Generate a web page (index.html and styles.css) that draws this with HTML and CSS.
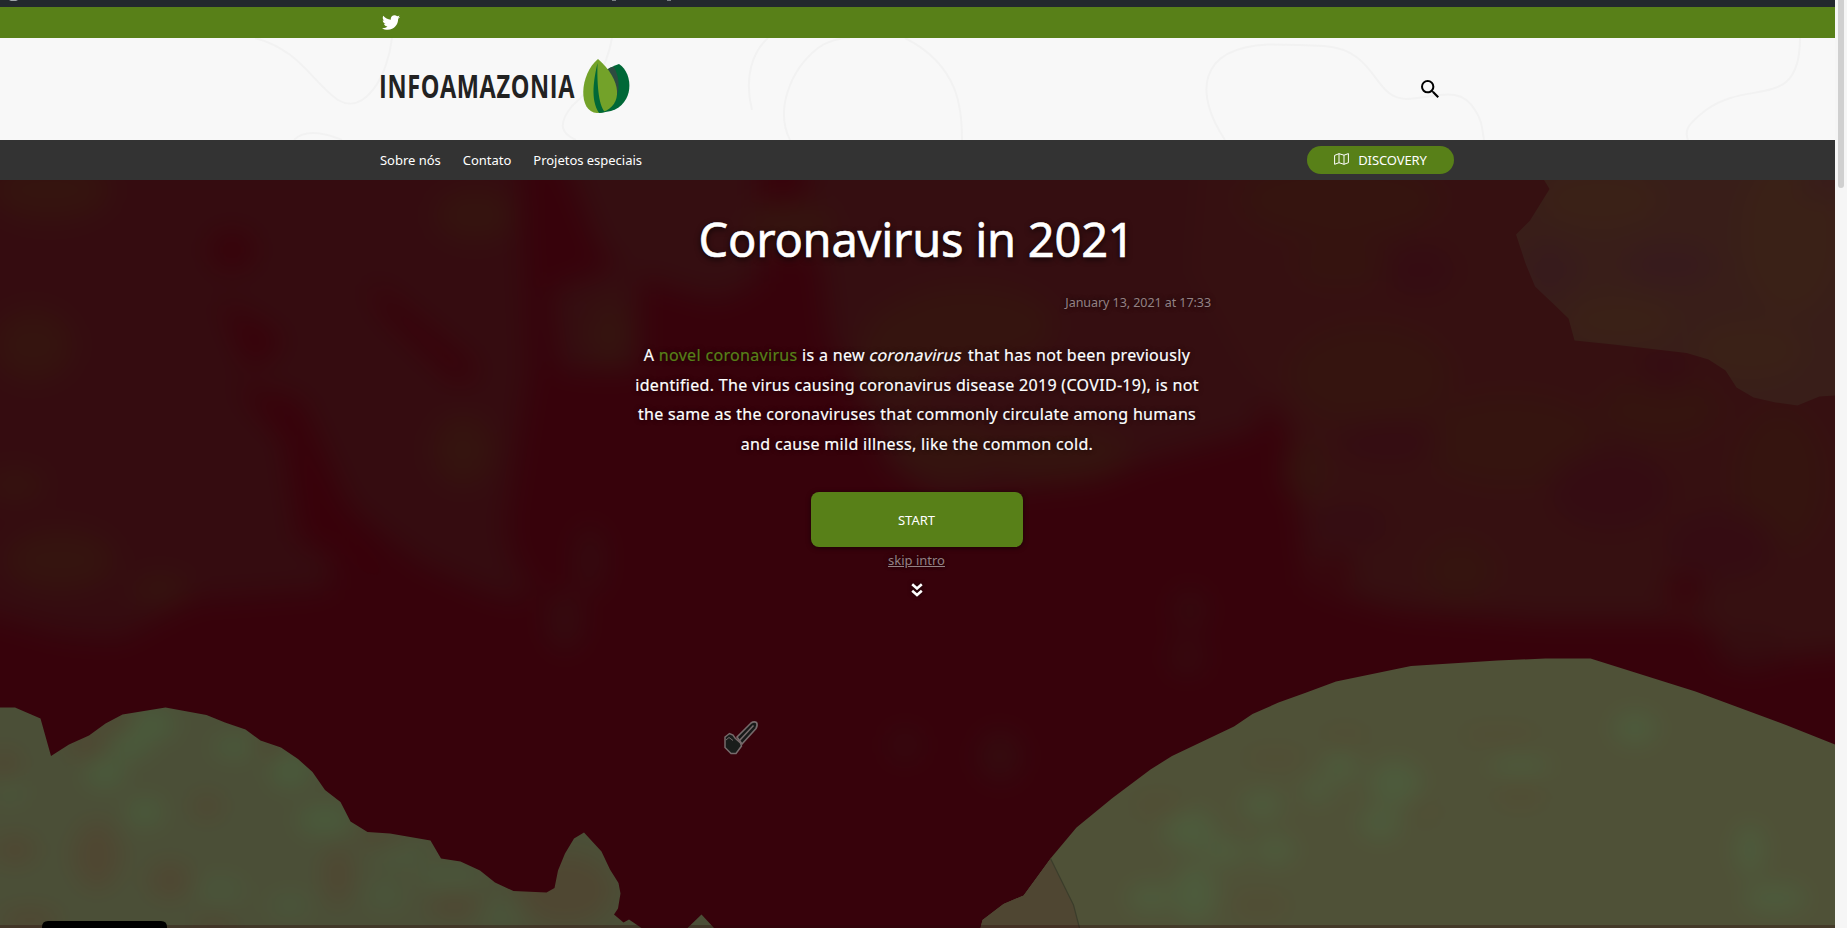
FILE: index.html
```html
<!DOCTYPE html>
<html lang="pt-BR">
<head>
<meta charset="utf-8">
<title>Coronavirus in 2021 - InfoAmazonia</title>
<link rel="stylesheet" href="styles.css">
</head>
<body>
<div class="window">
<div class="page">
  <div class="adminbar"><svg width="1835" height="7" viewBox="0 0 1835 7"><g fill="#a0a5aa"><path d="M9 0h9l-2 1h-5z"/><path d="M612 0h4v1h-4zM667 0h4v1h-4z" opacity=".7"/></g></svg></div>
  <div class="social">
    <div class="container">
      <svg class="twitter" width="18" height="15" viewBox="0 0 512 416"><path fill="#fff" d="M459 104c.3 4.500.3 9 .3 13.600C459.300 256 353.700 416 161 416 101.500 416 46.100 398.800 0 368.800c8.400 1 16.600 1.300 25.300 1.300 49 0 94.200-16.600 130.300-44.800-46.100-1-84.800-31.200-98.100-72.800 6.500 1 13 1.600 19.800 1.600 9.400 0 18.800-1.300 27.600-3.600C56.800 240.800 20.800 198.500 20.800 147.200v-1.300c14 7.800 30.200 12.700 47.400 13.300C39.800 140.300 21.400 108.200 21.400 71.700c0-19.500 5.200-37.400 14.300-53C87.400 82.400 165 124.100 252 128.700c-1.600-7.800-2.600-15.900-2.600-24C249.400 46.800 296.200 0 354.400 0c30.200 0 57.500 12.700 76.700 33.100 23.700-4.500 46.500-13.300 66.600-25.300-7.800 24.400-24.400 44.800-46.100 57.800 21.100-2.300 41.600-8.100 60.400-16.200-14.300 20.800-32.200 39.300-53 54.600z"/></svg>
    </div>
  </div>
  <header class="masthead">
    <svg class="contours" width="1835" height="102" viewBox="0 38 1835 102" fill="none" stroke="#f2f2f2" stroke-width="2"><path d="M255 38C300 50 312 82 338 100C365 116 388 75 392 38M612 38C606 72 590 90 572 106C556 126 563 134 576 140M294 140C304 130 320 131 342 140M752 110C744 78 752 52 768 38M790 140C775 110 790 70 818 48Q832 38 850 38M905 38C960 66 962 110 962 140M1225 140C1195 95 1196 48 1268 44.500Q1300 45 1324 46C1378 50 1372 98 1406 99C1435 98 1460 84 1475 110C1482 120 1482 128 1484 140M1800 38C1800 112 1750 78 1706 110C1688 124 1684 130 1688 140"/></svg>
    <div class="container">
      <svg class="logo" width="252" height="60" viewBox="380 57 252 60">
        <text class="wordmark" x="379" y="97.700" textLength="196" lengthAdjust="spacingAndGlyphs">INFOAMAZONIA</text>
        <path fill="#006837" d="M619 64C634 74 634 104 611 111L600 113L602 74Q611 66 619 64z"/>
        <path fill="#2d4c41" d="M608 69C611 67 612 67 614 67C624 86 617 106 601 112L598 112V70z"/>
        <path fill="#73a229" d="M598 59C622 80 623 105 603 112Q600 113 597 113C578 112 579 75 598 59z"/>
        <path fill="#006837" d="M597.500 63C597 80 598 105 605 112L599 113C590 99 594 79 597.500 63z"/>
      </svg>
      <svg class="search" width="18" height="18" viewBox="3 3 17.500 17.500"><path fill="#000" d="M15.500 14h-.79l-.28-.27A6.471 6.471 0 0 0 16 9.500 6.500 6.500 0 1 0 9.500 16c1.610 0 3.090-.59 4.230-1.570l.27.280v.79l5 4.990L20.490 19zm-6 0C7.010 14 5 11.990 5 9.500S7.010 5 9.500 5 14 7.010 14 9.500 11.990 14 9.500 14z"/></svg>
    </div>
  </header>
  <nav class="mainnav">
    <div class="container">
      <ul class="menu"><li><a>Sobre nós</a></li><li><a>Contato</a></li><li><a>Projetos especiais</a></li></ul>
      <a class="discovery"><svg width="15" height="12" viewBox="0 0 15 12" fill="none" stroke="#fff"><path stroke-linejoin="round" d="M.6 2.400L5 .7L10 2.200L14.400.6V9.700L10 11.300L5 9.700L.6 11.300zM5 .7V9.700M10 2.200V11.300"/></svg><span>DISCOVERY</span></a>
    </div>
  </nav>
  <main class="hero">
    <svg class="map" width="1835" height="748" viewBox="0 180 1835 748">
      <defs>
        <filter id="soft" color-interpolation-filters="sRGB" x="-20%" y="-20%" width="140%" height="140%"><feGaussianBlur stdDeviation="14"/></filter>
        <filter id="haze" color-interpolation-filters="sRGB" x="-20%" y="-20%" width="140%" height="140%"><feGaussianBlur stdDeviation="11"/></filter>
        <clipPath id="west"><path d="M0 707.500H15L40.500 718.500L51 756L69 744.500L89 735.500L105.500 723.500L122.500 714.500L165.500 707.500L206.500 715L225 722.500L245.500 729.500L260.500 740.500L281 747.500L298 759L312.500 772L325 790L340.500 802L350.500 821.500L367.500 832L390 833.500L430.500 840.500L441 858.500L460.500 861.500L480 870.500L495 882.500L513.500 891L546.500 892.500L554.500 888L558 870.500L565 853.500L574 838.500L584 832.500L601.500 851.500L610 869.500L618.500 883L620.500 893.500L618 908.500L614 914.500L623.500 922.500L629 919.500L641.500 928H0zM687.500 928L701.500 914.500L714 928z"/></clipPath>
        <clipPath id="east"><path d="M980.500 928L982.500 920L1003.500 904L1023.500 895.500L1050.500 858.500L1076.500 827.500L1112.500 798L1150.500 769.500L1172 756L1234 726.500L1252.500 714L1278.500 702.500L1305 693L1336 681.500L1411 666L1497.500 660.500L1545.500 658.500H1590.500L1695.500 691.500L1786 725L1835 744.500V928z"/></clipPath>
        <clipPath id="north"><path d="M1544 180L1549.500 189L1530 220.500L1516 234.500L1525.500 263.500L1535 286.500L1554 304.500L1568.500 318.500L1574.500 340.500L1613 344.500L1686.500 353L1708.500 359.500L1725.500 370.500L1736.500 387.500L1753.500 397.500L1775.500 402.500L1797.500 405.500L1819.500 396.500L1835 395.500V180z"/></clipPath>
      </defs>
      <g filter="url(#soft)">
        <path fill="#37020b" d="M-300 0H2135V1128H-300z"/>
        <path fill="#350c10" d="M-30 150H520L530 370L510 500Q500 555 535 590Q520 610 470 585L425 565L390 540L340 500L330 590L190 600L120 640L60 635L-30 610z"/>
        <path fill="#350e11" d="M560 150H760V280L720 300Q640 285 600 250zM550 290L640 260V370L560 370zM800 150H1260L1290 250L1260 430L1080 480L940 500L890 470L860 400L830 340L820 260z"/>
        <path fill="#361011" d="M1200 150H1870V650L1760 660L1690 620L1540 620L1400 610L1310 585L1290 430L1240 360L1190 270z"/>
        <g fill="#35140f"><ellipse cx="50" cy="190" rx="60" ry="30"/><ellipse cx="33" cy="345" rx="40" ry="35"/><ellipse cx="60" cy="560" rx="55" ry="30"/><ellipse cx="15" cy="485" rx="30" ry="15"/><ellipse cx="160" cy="590" rx="30" ry="15"/><ellipse cx="475" cy="215" rx="40" ry="25"/><ellipse cx="463" cy="450" rx="30" ry="35"/><ellipse cx="610" cy="335" rx="20" ry="35"/><ellipse cx="790" cy="225" rx="45" ry="25"/><ellipse cx="970" cy="325" rx="85" ry="40"/><ellipse cx="900" cy="355" rx="40" ry="50"/><ellipse cx="950" cy="450" rx="55" ry="30"/><ellipse cx="1060" cy="455" rx="70" ry="28"/><ellipse cx="1340" cy="200" rx="100" ry="40"/><ellipse cx="1340" cy="265" rx="45" ry="20"/><ellipse cx="1370" cy="375" rx="80" ry="50"/><ellipse cx="1510" cy="440" rx="90" ry="45"/><ellipse cx="1460" cy="570" rx="35" ry="30"/><ellipse cx="1660" cy="410" rx="60" ry="30"/><ellipse cx="1780" cy="480" rx="45" ry="70"/><ellipse cx="1305" cy="470" rx="20" ry="30"/></g>
        <g fill="#350c12"><ellipse cx="1420" cy="270" rx="35" ry="25"/><ellipse cx="1665" cy="370" rx="25" ry="20"/><ellipse cx="1610" cy="490" rx="60" ry="40"/><ellipse cx="1390" cy="440" rx="50" ry="20"/><ellipse cx="1720" cy="545" rx="55" ry="35"/><ellipse cx="1350" cy="525" rx="40" ry="20"/></g>
        <g fill="#38010a"><ellipse cx="232" cy="250" rx="22" ry="18"/><path d="M220 300L285 340L250 370zM235 385L300 400L345 500L400 590L300 540L285 440z"/><path d="M370 280L480 370L460 385L380 310z"/><ellipse cx="1335" cy="570" rx="15" ry="15"/><ellipse cx="1685" cy="590" rx="18" ry="14"/></g>
        <g fill="#340d10"><ellipse cx="565" cy="620" rx="16" ry="30"/><ellipse cx="590" cy="560" rx="12" ry="35"/><ellipse cx="1190" cy="610" rx="14" ry="20"/><ellipse cx="1187" cy="657" rx="16" ry="16"/><ellipse cx="1000" cy="756" rx="20" ry="24"/><ellipse cx="1750" cy="650" rx="35" ry="18"/><ellipse cx="905" cy="745" rx="14" ry="14"/></g>
      </g>
      <g clip-path="url(#north)">
        <g filter="url(#soft)"><path fill="#391e19" d="M1300 0H2035V620H1300z"/><g fill="#3a2117"><ellipse cx="1600" cy="200" rx="60" ry="30"/><ellipse cx="1620" cy="320" rx="55" ry="25"/><ellipse cx="1790" cy="235" rx="50" ry="80"/><ellipse cx="1750" cy="350" rx="55" ry="30"/></g><g fill="#371a1d"><ellipse cx="1670" cy="265" rx="45" ry="18"/><ellipse cx="1550" cy="270" rx="25" ry="25"/><ellipse cx="1820" cy="185" rx="18" ry="10"/></g></g>
      </g>
      <g clip-path="url(#west)">
        <g filter="url(#haze)"><path fill="#4b4f37" d="M-300 490H1030V1128H-300z"/><g fill="#4a5a3b"><ellipse cx="150" cy="725" rx="26" ry="16"/><ellipse cx="130" cy="745" rx="20" ry="14"/><ellipse cx="235" cy="747" rx="22" ry="10"/><ellipse cx="290" cy="770" rx="20" ry="18"/><ellipse cx="105" cy="772" rx="20" ry="16"/><ellipse cx="145" cy="812" rx="18" ry="14"/><ellipse cx="325" cy="820" rx="28" ry="15"/></g><g fill="#4a553a"><ellipse cx="400" cy="856" rx="28" ry="12"/><ellipse cx="450" cy="878" rx="32" ry="14"/><ellipse cx="385" cy="895" rx="20" ry="14"/><ellipse cx="220" cy="890" rx="25" ry="14"/><ellipse cx="290" cy="905" rx="22" ry="12"/><ellipse cx="500" cy="915" rx="25" ry="12"/><ellipse cx="10" cy="790" rx="15" ry="14"/></g><g fill="#4f4732"><ellipse cx="87" cy="745" rx="19" ry="14"/><ellipse cx="115" cy="722" rx="18" ry="10"/><ellipse cx="5" cy="765" rx="16" ry="14"/><ellipse cx="97" cy="855" rx="24" ry="34"/><ellipse cx="15" cy="850" rx="22" ry="14"/><ellipse cx="207" cy="806" rx="15" ry="12"/><ellipse cx="170" cy="880" rx="22" ry="18"/><ellipse cx="338" cy="875" rx="14" ry="30"/><ellipse cx="270" cy="747" rx="15" ry="8"/><ellipse cx="380" cy="837" rx="25" ry="8"/><ellipse cx="565" cy="890" rx="48" ry="36"/><ellipse cx="455" cy="905" rx="28" ry="12"/><ellipse cx="30" cy="920" rx="30" ry="12"/><ellipse cx="215" cy="925" rx="20" ry="9"/></g></g>
      </g>
      <g clip-path="url(#east)">
        <g filter="url(#haze)"><path fill="#4f5137" d="M660 450H2135V1128H660z"/><g fill="#4d5b3c"><ellipse cx="1340" cy="767" rx="16" ry="16"/><ellipse cx="1317" cy="790" rx="14" ry="12"/><ellipse cx="1395" cy="783" rx="26" ry="22"/><ellipse cx="1262" cy="805" rx="20" ry="14"/><ellipse cx="1190" cy="830" rx="26" ry="20"/><ellipse cx="1225" cy="852" rx="22" ry="12"/><ellipse cx="1275" cy="850" rx="20" ry="14"/><ellipse cx="1150" cy="898" rx="22" ry="14"/><ellipse cx="1195" cy="893" rx="22" ry="30"/><ellipse cx="1380" cy="823" rx="20" ry="16"/><ellipse cx="1520" cy="766" rx="30" ry="9"/><ellipse cx="1635" cy="728" rx="22" ry="16"/><ellipse cx="1750" cy="850" rx="14" ry="26"/><ellipse cx="1775" cy="898" rx="32" ry="14"/></g><g fill="#514d34"><ellipse cx="1345" cy="737" rx="24" ry="8"/><ellipse cx="1275" cy="758" rx="32" ry="8"/><ellipse cx="1425" cy="812" rx="12" ry="10"/><ellipse cx="1160" cy="805" rx="28" ry="10"/><ellipse cx="1520" cy="795" rx="26" ry="12"/><ellipse cx="1260" cy="905" rx="30" ry="12"/><ellipse cx="1500" cy="735" rx="40" ry="8"/></g></g>
        <path fill="#4f4632" d="M1050.500 858.500L1073.500 905L1079.500 928H980V904L1023.500 895.500z"/>
        <path d="M1050.500 858.500L1073.500 905L1079.500 928" fill="none" stroke="#3b3d2b" stroke-width="1.200"/>
      </g>
      <path fill="#2a0509" opacity=".3" d="M0 925H1835V928H0z"/>
      <path d="M42 928V927Q42 921 48 921H161Q167 921 167 927V928z"/>
      <g transform="translate(724 721)">
        <path d="M13 16L27 2Q30 0 32.500 1.500Q34 4 32 7.500L18 23z" fill="#171a19" stroke="#766a6b" stroke-width="1.600"/>
        <path d="M15 20L29.500 4.500" stroke="#766a6b" stroke-width="1.600"/>
        <path d="M1 19.500V16L5.500 12.500L9 14L11 17L16.500 22L17.500 25L12 32.500H7L1 26.500z" fill="#191d1b" stroke="#766a6b" stroke-width="1.500"/>
        <path d="M2 19L5 16.500L9 19.500" stroke="#766a6b" fill="none"/>
      </g>
    </svg>
    <section class="intro">
      <h1>Coronavirus in 2021</h1>
      <p class="date">January 13, 2021 at 17:33</p>
      <p class="lead">A <a>novel coronavirus</a> is a new <em>coronavirus</em> that has not been previously<br>identified. The virus causing coronavirus disease 2019 (COVID-19), is not<br>the same as the coronaviruses that commonly circulate among humans<br>and cause mild illness, like the common cold.</p>
      <button class="start">START</button>
      <a class="skip">skip intro</a>
      <svg class="more" width="12" height="14" viewBox="0 0 12 14" fill="none" stroke="#fff" stroke-width="2.600"><path d="M1.200 1.300L6 5.500L10.800 1.300M1.200 7.800L6 12L10.800 7.800"/></svg>
    </section>
  </main>
</div>
<div class="scrollbar"><div class="thumb"></div></div>
</div>
</body>
</html>
```
FILE: styles.css
```css
* { box-sizing: border-box; }
body { margin: 0; font-family: "Noto Sans", sans-serif; color: #fff; overflow: hidden; }
svg { display: block; flex: none; }
.window { display: flex; width: 1847px; height: 928px; }
.page { width: 1835px; height: 928px; display: flex; flex-direction: column; overflow: hidden; }
.container { width: 1074px; height: 100%; margin-left: 380px; display: flex; align-items: center; justify-content: space-between; }
.adminbar { height: 7px; background: #23282d; }
.social { height: 31px; background: #588018; }
.twitter { margin: 0 0 0 2px; }
.masthead { height: 102px; background: #f8f8f8; position: relative; }
.contours { position: absolute; inset: 0; }
.masthead .container { position: relative; }
.logo { margin-bottom: 4px; overflow: visible; }
.wordmark { font: 700 31.500px "Open Sans", sans-serif; fill: #222; letter-spacing: .8px; }
.search { margin: 0 15px 1px 0; }
.mainnav { height: 40px; background: #333; }
.menu { display: flex; gap: 22px; list-style: none; margin: 0; padding: 0; font-size: 13px; line-height: 18px; letter-spacing: -.02px; }
.discovery { width: 147px; height: 28px; border-radius: 14px; background: #588018; display: flex; align-items: center; justify-content: center; gap: 9px; font-size: 13px; letter-spacing: -.1px; }
.discovery svg { margin-bottom: 2px; }
.hero { height: 748px; position: relative; }
.map { position: absolute; inset: 0; }
.intro { position: relative; width: 589px; margin: 0 0 0 622px; padding-top: 26px; display: flex; flex-direction: column; align-items: center; text-align: center; text-shadow: 0 0 5px rgba(0,0,0,.7); }
h1 { margin: 0; font-size: 47px; line-height: 66px; font-weight: 400; letter-spacing: -.25px; white-space: nowrap; text-shadow: 0 2px 6px rgba(0,0,0,.8); -webkit-text-stroke: .6px #fff; }
.date { align-self: flex-end; margin: 22px 0 0; font-size: 12.500px; line-height: 18px; letter-spacing: -.06px; color: #948184; }
.lead { margin: 29px 0 0 1px; font-size: 16px; line-height: 29.600px; letter-spacing: .32px; white-space: nowrap; -webkit-text-stroke: .2px; }
.lead em { display: inline-block; margin: 0 1px; font-style: normal; line-height: 20px; transform: skewX(-13deg); }
.lead a { color: #588018; }
.start { width: 212px; height: 55px; margin-top: 33px; border: 0; border-radius: 8px; background: #588018; color: #fff; font: 13px "Noto Sans", sans-serif; box-shadow: 0 1px 5px rgba(0,0,0,.5); }
.skip { margin-top: 4px; font-size: 13px; line-height: 18px; color: #948184; text-decoration: underline; }
.more { margin-top: 14px; filter: drop-shadow(0 0 2px rgba(0,0,0,.7)); }
.scrollbar { width: 12px; height: 928px; background: #f6f6f6; display: flex; justify-content: center; }
.thumb { width: 6px; height: 188px; background: #d0d0d0; border-radius: 0 0 3px 3px; }
```
